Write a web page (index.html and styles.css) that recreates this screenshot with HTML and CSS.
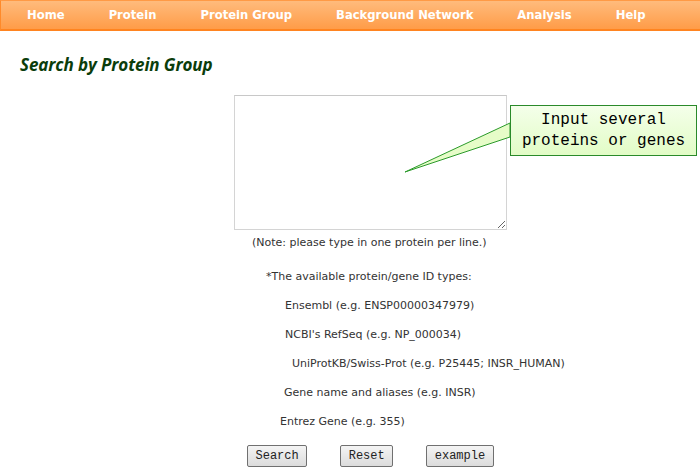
FILE: index.html
```html
<!DOCTYPE html>
<html lang="en">

<head>
  <meta charset="UTF-8">
  <title>Search by Protein Group</title>
  <link rel="stylesheet" href="styles.css">
</head>

<body>
  <!-- Top menu -->
  <div class="nav-bar">
    <a class="nav-item nav-home" href="#">Home</a>
    <a class="nav-item" href="#">Protein</a>
    <a class="nav-item" href="#">Protein Group</a>
    <a class="nav-item" href="#">Background Network</a>
    <a class="nav-item" href="#">Analysis</a>
    <a class="nav-item" href="#">Help</a>
  </div>

  <h2 class="page-title">Search by Protein Group</h2>

  <form class="group-form">
    <div class="input-area">
      <textarea class="protein-list" name="proteins"></textarea>
      <!-- Hint bubble -->
      <div class="hint-bubble">
        <svg class="hint-tail" width="110" height="60" viewBox="0 0 110 60">
          <polygon points="1,53 106,4 106,18" fill="#e6fcc8" stroke="#2a9a2a" stroke-width="1" />
        </svg>
        <div class="hint-box">Input several<br>proteins or genes</div>
      </div>
    </div>

    <p class="form-note">(Note: please type in one protein per line.)</p>

    <p class="id-line id-head">*The available protein/gene ID types:</p>
    <p class="id-line id-ensembl">Ensembl (e.g. ENSP00000347979)</p>
    <p class="id-line id-refseq">NCBI's RefSeq (e.g. NP_000034)</p>
    <p class="id-line id-uniprot">UniProtKB/Swiss-Prot (e.g. P25445; INSR_HUMAN)</p>
    <p class="id-line id-gene">Gene name and aliases (e.g. INSR)</p>
    <p class="id-line id-entrez">Entrez Gene (e.g. 355)</p>

    <div class="form-buttons">
      <button class="form-button btn-search" type="button">Search</button>
      <button class="form-button btn-reset" type="reset">Reset</button>
      <button class="form-button btn-example" type="button">example</button>
    </div>
  </form>
</body>

</html>
```

FILE: styles.css
```css
body {
  margin: 0;
  padding: 0;
  background: #fff;
  font-family: 'DejaVu Sans', Verdana, sans-serif;
}

/* Menu bar */
.nav-bar {
  display: flex;
  height: 28px;
  align-items: center;
  padding-left: 4px;
  background: linear-gradient(#ffbb7c, #ff9c48);
  border-top: 1px solid #ff9a45;
  border-left: 1px solid #ff8a2a;
  border-bottom: 2px solid #ff8420;
}

.nav-item {
  color: #fff;
  font-weight: bold;
  font-size: 11.6px;
  text-decoration: none;
  padding: 0 22px;
}

/* Title */
.page-title {
  margin: 22px 0 0 20px;
  font-family: 'Open Sans', sans-serif;
  font-style: italic;
  font-weight: bold;
  font-size: 17px;
  letter-spacing: -0.1px;
  color: #0b3d0b;
}

/* Form */
.group-form {
  margin-top: 19px;
}

.input-area {
  position: relative;
  margin-left: 234px;
  width: 273px;
  height: 135px;
}

.protein-list {
  width: 273px;
  height: 135px;
  box-sizing: border-box;
  border: 1px solid #d4d4d4;
  border-top-color: #c8c8c8;
  margin: 0;
  display: block;
}

.hint-bubble {
  position: absolute;
  left: 170px;
  top: 10px;
}

.hint-tail {
  position: absolute;
  left: 0;
  top: 14px;
}

.hint-box {
  position: absolute;
  left: 106px;
  top: 0;
  width: 187px;
  height: 51px;
  box-sizing: border-box;
  border: 1px solid #2a8a2a;
  background: linear-gradient(#f4ffea, #e2fcc6);
  font-family: 'Liberation Mono', monospace;
  font-size: 16px;
  line-height: 21px;
  text-align: center;
  padding-top: 4px;
  color: #000;
}

.form-note {
  margin: 6px 0 0 252px;
  font-size: 11px;
  color: #333;
}

.id-line {
  margin: 0;
  font-size: 11px;
  color: #333;
  line-height: 29px;
}

.id-head {
  margin-top: 13px;
  padding-left: 266px;
}

.id-ensembl,
.id-refseq {
  padding-left: 285px;
}

.id-uniprot {
  padding-left: 292px;
}

.id-gene {
  padding-left: 284px;
}

.id-entrez {
  padding-left: 280px;
}

.form-buttons {
  display: flex;
  gap: 33px;
  margin: 9px 0 0 247px;
}

.form-button {
  height: 22px;
  font-family: 'Liberation Mono', monospace;
  font-size: 12px;
  color: #222;
  background: linear-gradient(#f4f4f4, #dcdcdc);
  border: 1px solid #707070;
  border-radius: 2px;
  padding: 0 7.5px;
}
```
